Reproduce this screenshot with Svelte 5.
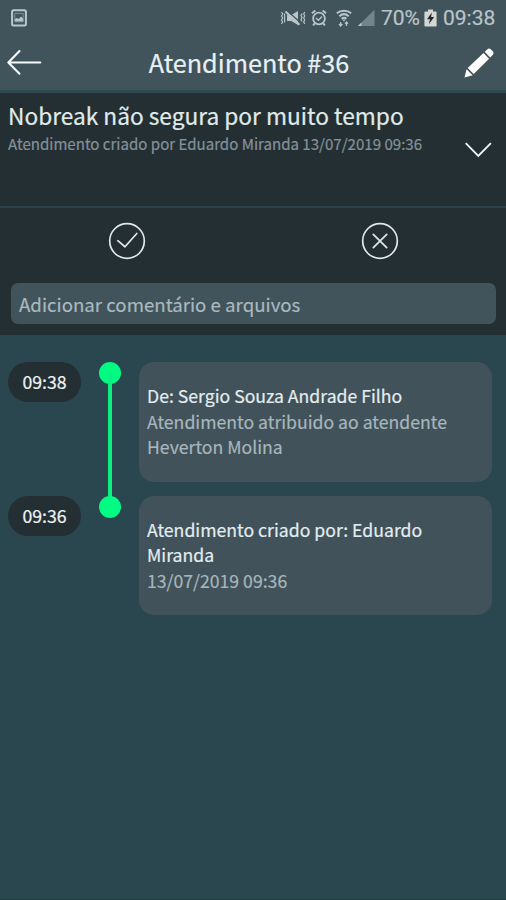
<script>
  const ticket = {
    number: 36,
    title: 'Nobreak não segura por muito tempo',
    subtitle: 'Atendimento criado por Eduardo Miranda 13/07/2019 09:36'
  }

  const events = [
    {
      time: '09:38',
      title: 'De: Sergio Souza Andrade Filho',
      text: 'Atendimento atribuido ao atendente Heverton Molina'
    },
    {
      time: '09:36',
      title: 'Atendimento criado por: Eduardo Miranda',
      text: '13/07/2019 09:36'
    }
  ]
</script>

<div class="screen">
  <div class="status-bar">
    <svg class="picture" width="16" height="18" viewBox="0 0 16 18">
      <rect x="1.1" y="1.3" width="13.8" height="15.2" rx="1.5" fill="none" stroke="#b9c8ce" stroke-width="2" />
      <path d="M3.8 12.6V10l2-1 2 1 2.2-2.6 2.2 2.4v2.8z" fill="#b9c8ce" />
      <path d="M3.8 4.4h8.4v8.4H3.8z" fill="none" stroke="#8fa0a7" stroke-width=".8" />
    </svg>
    <svg width="26" height="18" viewBox="0 0 26 18" fill="none" stroke="#b9c5ca">
      <path d="M1.5 3l1.2 2-1.2 2 1.2 2-1.2 2 1.2 2-1.2 2M4.6 4.5v9M22 4.5l-1 2 1 2-1 2 1 2M24.7 3l-1 2 1 2-1 2 1 2-1 2 1 2" stroke-width="1.2" />
      <path d="M7 6h4.300L18 2v14l-6.700-4H7z" fill="#b9c5ca" stroke="none" />
      <path d="M7 1.700L21.500 14.500" stroke="#41535b" stroke-width="1.300" />
      <path d="M5.500 2.500L19.500 15.800" stroke-width="2" />
    </svg>
    <svg class="alarm" width="16" height="18" viewBox="0 0 16 18" fill="none" stroke="#b9c5ca">
      <circle cx="8" cy="9.5" r="5.9" stroke-width="1.8" />
      <path d="M1 4.2l3.3-2.7M15 4.2l-3.3-2.7M3.8 14.3l-1.7 2M12.2 14.3l1.7 2" stroke-width="2" />
      <path d="M5 9l2.4 2.2L11 7.5" stroke-width="1.4" />
    </svg>
    <svg class="wifi" width="16" height="18" viewBox="0 0 16 18" fill="none" stroke="#b9c5ca">
      <path d="M.8 4.3C4.8.8 11.2.8 15.2 4.3M3.3 7.2c2.9-2.6 6.5-2.6 9.4 0M5.6 9.8c1.6-1.3 3.2-1.3 4.8 0" stroke-width="2" />
      <path d="M6.2 10.5h3.6L8 12.6z" fill="#b9c5ca" stroke="none" />
      <path d="M4.7 17v-4M3 15l1.7 2 1.6-2M10.5 17v-4M9 14.6l1.5-1.6 1.5 1.6" stroke-width="1.3" />
    </svg>
    <svg class="signal" width="18" height="18" viewBox="0 0 18 18">
      <path d="M17.500 .8V17H1z" fill="#73858c" />
      <path d="M4.5 13.4V17H.9z" fill="#b9c5ca" />
    </svg>
    <span class="percent">70%</span>
    <svg class="battery" width="13" height="18" viewBox="0 0 13 18">
      <path d="M4 .5h5v2h2.6q1 0 1 1V16.5q0 1-1 1H1.4q-1 0-1-1V3.5q0-1 1-1H4z" fill="#d3d6d3" />
      <path d="M7.8 3.6L3 10.3h3l-1.2 5L10.2 8H7.1z" fill="#202a2e" />
    </svg>
    <span class="clock">09:38</span>
  </div>

  <header class="toolbar">
    <svg width="36" height="28" viewBox="0 0 36 28" fill="none" stroke="#f4fafb" stroke-width="2.1" stroke-linecap="round" stroke-linejoin="round">
      <path d="M13.5 2L2.300 13.500l11.200 11.200M2.300 13.500h32" />
    </svg>
    <h1>Atendimento #{ticket.number}</h1>
    <svg width="30" height="30" viewBox="0 0 30 30" fill="#fff">
      <path d="M.5 29.5L2.6 21.3l6 6z" />
      <path d="M3.7 20L19.5 5l5.6 5.8L9.7 26z" />
      <path d="M20.7 3.8L23.2 1.4q1.9-1.7 3.8.1l1.7 1.8q1.6 1.8-.1 3.6l-2.5 2.5z" />
    </svg>
  </header>

  <section class="summary">
    <div class="summary-text">
      <h2>{ticket.title}</h2>
      <p>{ticket.subtitle}</p>
    </div>
    <svg class="chevron" width="28" height="18" viewBox="0 0 28 18" fill="none" stroke="#edf5f5" stroke-width="1.9">
      <path d="M1.7 2.2L14.300 14.8 26.900 2.2" />
    </svg>
  </section>

  <section class="actions">
    <div class="buttons">
      <button type="button" aria-label="Concluir">
        <svg width="38" height="38" viewBox="0 0 38 38" fill="none" stroke="#e1e8e8" stroke-width="1.7">
          <circle cx="19" cy="19" r="17.3" />
          <path d="M9.8 18.7l7.1 6L28.8 11.5" stroke-linecap="round" />
        </svg>
      </button>
      <button type="button" aria-label="Cancelar">
        <svg width="38" height="38" viewBox="0 0 38 38" fill="none" stroke="#e1e8e8" stroke-width="1.7">
          <circle cx="19" cy="19" r="17.3" />
          <path d="M12.3 12.3l13.4 13.4M25.7 12.3L12.3 25.7" stroke-linecap="round" />
        </svg>
      </button>
    </div>
    <div class="comment">Adicionar comentário e arquivos</div>
  </section>

  <main class="timeline">
    {#each events as event}
      <article class="event">
        <time>{event.time}</time>
        <div class="track"><span class="dot"></span></div>
        <div class="card">
          <strong>{event.title}</strong>
          <p>{event.text}</p>
        </div>
      </article>
    {/each}
  </main>
</div>

<style>
  :global(body) {
    margin: 0;
    background: #2a464f;
  }

  .screen {
    display: flex;
    flex-direction: column;
    box-sizing: border-box;
    height: 900px;
    background: #2a464f;
    border-bottom: 1px solid #253b43;
    font-family: 'Noto Sans CJK SC', 'Noto Sans', sans-serif;
    -webkit-text-stroke: 0.2px currentColor;
    overflow: hidden;
  }

  h1,
  h2,
  p {
    margin: 0;
    font-weight: 400;
  }

  svg {
    display: block;
    flex-shrink: 0;
  }

  .status-bar {
    display: flex;
    align-items: center;
    height: 35px;
    padding: 0 10px 0 11px;
    background: #41535b;
    color: #b9c5ca;
    font-family: Roboto, sans-serif;
    font-size: 21px;
    white-space: nowrap;
  }

  .picture {
    margin-right: auto;
  }

  .alarm {
    margin-left: 5px;
  }

  .wifi {
    margin-left: 9px;
  }

  .signal {
    margin: 0 6px 0 5px;
  }

  .percent {
    width: 39px;
  }

  .battery {
    margin: 0 6px 0 4px;
  }

  .clock {
    width: 53px;
  }

  .toolbar {
    display: flex;
    align-items: center;
    justify-content: space-between;
    height: 55px;
    padding: 0 12px 0 6px;
    background: #41535b;
    border-bottom: 3px solid #304951;
  }

  h1 {
    margin: -2px 8px 0 0;
    color: #e7f1f5;
    font-size: 25.2px;
    line-height: 36px;
  }

  .summary {
    display: flex;
    justify-content: space-between;
    height: 113px;
    padding: 0 14px 0 8px;
    background: #242f34;
    border-bottom: 2px solid #29424a;
  }

  h2 {
    margin-top: 7px;
    color: #e0ebe9;
    font-size: 22.7px;
    line-height: 32px;
    white-space: nowrap;
  }

  .summary p {
    color: #84929a;
    font-size: 15.07px;
    line-height: 24px;
    white-space: nowrap;
  }

  .chevron {
    margin-top: 48px;
  }

  .actions {
    height: 127px;
    background: #242f33;
  }

  .buttons {
    display: flex;
    height: 75px;
  }

  .buttons button {
    display: flex;
    flex: 1;
    justify-content: center;
    padding: 13.5px 0 0;
    border: 0;
    background: none;
  }

  .comment {
    height: 41px;
    margin: 0 10px 0 11px;
    padding-left: 8px;
    border-radius: 7px;
    background: #41535b;
    color: #a9b9be;
    font-size: 18.67px;
    line-height: 41px;
  }

  .timeline {
    display: flex;
    flex-direction: column;
    gap: 14px;
    padding: 27px 14px 0 8px;
  }

  .event {
    display: grid;
    grid-template-columns: 73px 58px 353px;
    height: 119.5px;
  }

  time {
    height: 40px;
    border-radius: 20px;
    background: #242f33;
    color: #eef3f3;
    font-size: 17.7px;
    line-height: 39px;
    text-align: center;
  }

  .track {
    position: relative;
    display: flex;
    justify-content: center;
  }

  .dot {
    width: 22px;
    height: 22px;
    border-radius: 50%;
    background: #00fb83;
  }

  .event:not(:last-child) .track::after {
    content: '';
    position: absolute;
    top: 11px;
    bottom: -20px;
    width: 4px;
    background: #0bf080;
  }

  .card {
    box-sizing: border-box;
    padding: 21px 8px 0;
    border-radius: 15px;
    background: #41525a;
    font-size: 17.65px;
    line-height: 25.7px;
  }

  .card strong {
    display: block;
    color: #e3edf0;
    font-weight: 400;
  }

  .card p {
    color: #a7b6bc;
  }
</style>
